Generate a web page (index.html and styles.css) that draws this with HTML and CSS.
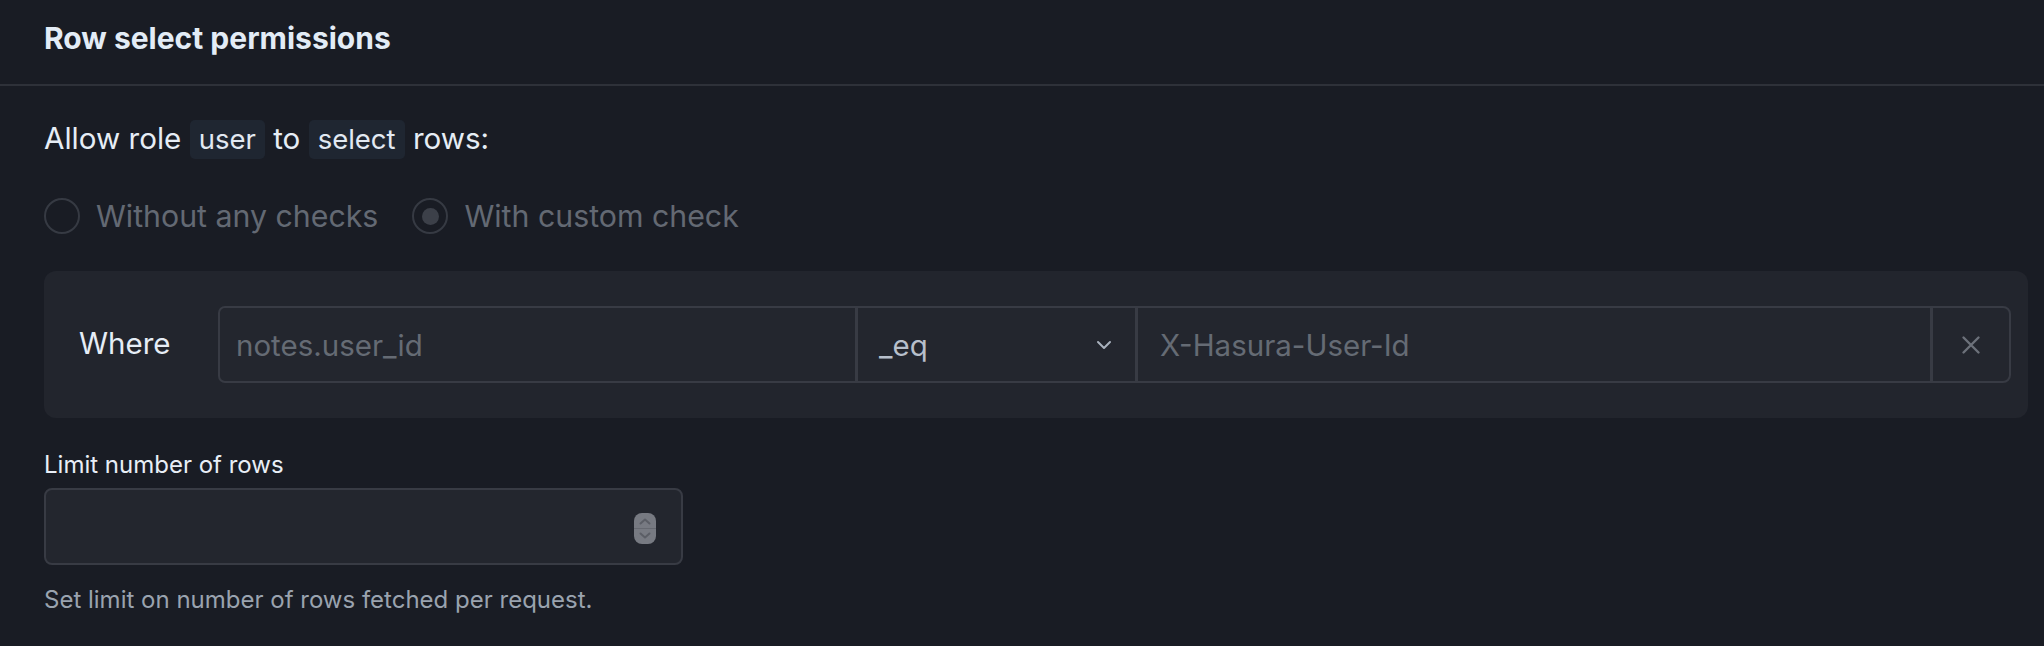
FILE: index.html
```html
<!DOCTYPE html>
<html lang="en">
<head>
<meta charset="utf-8">
<title>Row select permissions</title>
<link rel="stylesheet" href="styles.css">
</head>
<body>
<section class="panel">
  <header class="panel-head">
    <h2 class="panel-title">Row select permissions</h2>
  </header>
  <div class="panel-body">
    <p class="allow">Allow role <code class="pill">user</code> to <code class="pill">select</code> rows:</p>

    <div class="radios">
      <label class="radio">
        <span class="radio-ring"></span>
        <span class="radio-text">Without any checks</span>
      </label>
      <label class="radio">
        <span class="radio-ring is-checked"><span class="radio-dot"></span></span>
        <span class="radio-text">With custom check</span>
      </label>
    </div>

    <div class="where-box">
      <span class="where-label">Where</span>
      <div class="where-row">
        <div class="ctl ctl-field"><span class="placeholder">notes.user_id</span></div>
        <div class="ctl ctl-select">
          <span class="select-value">_eq</span>
          <svg class="chevron" width="16" height="10" viewBox="0 0 16 10" aria-hidden="true"><polyline points="2,2 8,8 14,2" fill="none" stroke="currentColor" stroke-width="2" stroke-linecap="round" stroke-linejoin="round"/></svg>
        </div>
        <div class="ctl ctl-value"><span class="placeholder">X-Hasura-User-Id</span></div>
        <button class="ctl ctl-remove" type="button" aria-label="Remove">
          <svg width="20" height="20" viewBox="0 0 20 20" aria-hidden="true"><path d="M2.5 2.5 L17.5 17.5 M17.5 2.5 L2.5 17.5" fill="none" stroke="currentColor" stroke-width="2.4" stroke-linecap="round"/></svg>
        </button>
      </div>
    </div>

    <div class="limit">
      <label class="limit-label">Limit number of rows</label>
      <div class="number-field">
        <span class="spinner">
          <svg width="22" height="31" viewBox="0 0 22 31" aria-hidden="true">
            <polyline points="6.5,10.5 11,6.5 15.5,10.5" fill="none" stroke="currentColor" stroke-width="2" stroke-linecap="round" stroke-linejoin="round"/>
            <line x1="0" y1="15.5" x2="22" y2="15.5" stroke="currentColor" stroke-width="1" opacity="0.6"/>
            <polyline points="6.5,20.5 11,24.5 15.5,20.5" fill="none" stroke="currentColor" stroke-width="2" stroke-linecap="round" stroke-linejoin="round"/>
          </svg>
        </span>
      </div>
      <p class="help">Set limit on number of rows fetched per request.</p>
    </div>
  </div>
</section>
</body>
</html>
```
FILE: styles.css
```css
* { box-sizing: border-box; }

html, body {
  margin: 0;
  background: #191c24;
}

body {
  font-family: Inter, "Noto Sans", sans-serif;
  color: #e5ecf5;
}

.panel-head {
  padding: 20px 44px 28px;
  border-bottom: 2px solid #2e3139;
}

.panel-title {
  margin: 0;
  font-size: 30px;
  line-height: 36px;
  font-weight: 700;
  color: #e3ecf6;
}

.panel-body {
  padding: 32px 16px 24px 44px;
}

.allow {
  margin: 0;
  font-size: 29.6px;
  line-height: 40px;
  color: #e6edf5;
}

.pill {
  display: inline-block;
  font-family: Inter, "Noto Sans", sans-serif;
  font-size: 27.5px;
  line-height: 39px;
  padding: 0 9px;
  border-radius: 5px;
  background: #1f2631;
  color: #e2e9f2;
}

.radios {
  display: flex;
  align-items: center;
  height: 40px;
  margin-top: 37px;
}

.radio {
  display: flex;
  align-items: center;
  gap: 16px;
  margin-right: 34px;
}

.radio-ring {
  width: 36px;
  height: 36px;
  border: 2.5px solid #363a43;
  border-radius: 50%;
  display: flex;
  align-items: center;
  justify-content: center;
}

.radio-dot {
  width: 17px;
  height: 17px;
  border-radius: 50%;
  background: #3c4049;
}

.radio-text {
  font-size: 30.3px;
  line-height: 40px;
  color: #636973;
}

.where-box {
  margin-top: 35px;
  display: flex;
  align-items: center;
  padding: 35px 17px 35px 35px;
  background: #22252d;
  border-radius: 12px;
}

.where-label {
  flex: 0 0 139px;
  font-size: 29.5px;
  line-height: 36px;
  padding-bottom: 4px;
  color: #e6edf6;
}

.where-row {
  flex: 1;
  display: flex;
  height: 77px;
}

.ctl {
  height: 77px;
  display: flex;
  align-items: center;
  background: #23262e;
  border: 2px solid #383b44;
  font-family: Inter, "Noto Sans", sans-serif;
  font-size: 29.5px;
}

.ctl + .ctl {
  margin-left: -1px;
}

.ctl-field {
  flex: 0 0 639px;
  padding-left: 16px;
  border-radius: 7px 0 0 7px;
}

.ctl-select {
  flex: 0 0 281px;
  padding: 0 23px 0 21px;
  justify-content: space-between;
}

.select-value {
  color: #b7bfcb;
}

.chevron {
  color: #a9b1bd;
}

.ctl-value {
  flex: 1;
  padding-left: 22px;
}

.ctl-remove {
  flex: 0 0 80px;
  justify-content: center;
  border-radius: 0 8px 8px 0;
  color: #6c717a;
  padding: 0;
  cursor: pointer;
}

.placeholder {
  color: #656b74;
}

.limit-label {
  display: block;
  margin-top: 32px;
  font-size: 24px;
  line-height: 30px;
  font-weight: 400;
  color: #e8eef6;
}

.number-field {
  margin-top: 8px;
  width: 639px;
  height: 77px;
  display: flex;
  align-items: center;
  justify-content: flex-end;
  padding-right: 25px;
  padding-top: 4px;
  background: #23262e;
  border: 2px solid #383b44;
  border-radius: 8px;
}

.spinner {
  display: flex;
  width: 22px;
  height: 31px;
  border-radius: 8px;
  background: #777a82;
  color: #5b5e66;
}

.help {
  margin: 20px 0 0;
  font-size: 24px;
  line-height: 30px;
  color: #9aa3af;
}
```
